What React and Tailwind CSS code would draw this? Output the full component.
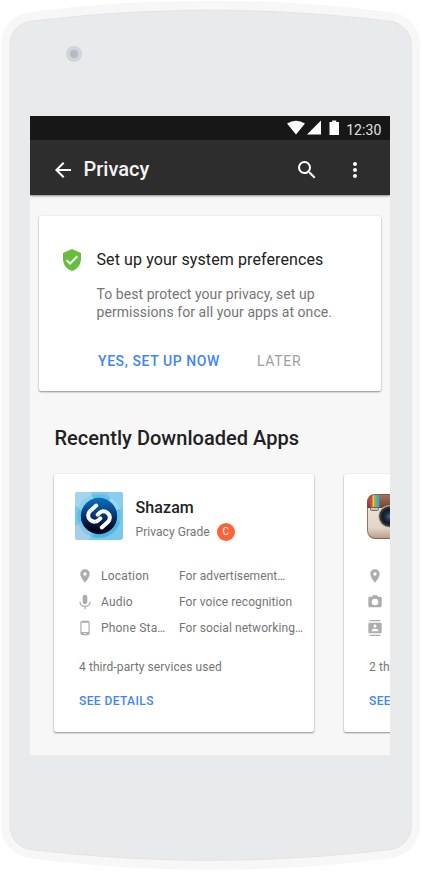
import React from 'react';
import {
  MdArrowBack, MdSearch, MdMoreVert, MdLocationOn, MdPhoneAndroid,
  MdContacts, MdVerifiedUser,
} from 'react-icons/md';

function DeviceShell() {
  return (
    <svg className="absolute inset-0" width="421" height="871" viewBox="0 0 421 871">
      <path d="M1 44C1 27 14 14 30 12.3C90 4 150 .8 210.5 .8S331 4 391 12.3C407 14 420 27 420 44V826C420 843 407 856 391 858.2C331 866 271 869.7 210.5 869.7S90 866 30 858.2C14 856 1 843 1 826Z" fill="#f7f7f7" />
      <path d="M10 44C10 32 20 22.5 31 21.3C90 14 150 10.3 210.5 10.3S331 14 390 21.3C401 22.5 411.3 32 411.3 44V826C411.3 839 401 848.5 390 849.5C331 856.5 271 860.3 210.5 860.3S90 856.5 31 849.5C20 848.5 10 839 10 826Z" fill="#e9eaec" stroke="#e3e4e8" />
      <circle cx="74" cy="54" r="8" fill="#d0d6d8" />
      <circle cx="74" cy="54" r="4" fill="#b4bac7" />
    </svg>
  );
}

function ShazamIcon() {
  return (
    <svg width="48" height="48" viewBox="0 0 48 48" className="block rounded-[3px]">
      <defs>
        <linearGradient id="sz" x1="0" y1="0" x2="0" y2="1">
          <stop offset="0" stopColor="#0c6fbd" />
          <stop offset=".45" stopColor="#083a7c" />
          <stop offset=".85" stopColor="#04061f" />
        </linearGradient>
      </defs>
      <rect width="48" height="48" fill="#7cc8ea" />
      <path d="M0 0H16L24 24L0 14Z" fill="#a3d5ee" />
      <path d="M0 48V34L24 24L14 48Z" fill="#a9cfe8" />
      <path d="M34 0L24 24L48 14V0Z" fill="#8acdf0" />
      <circle cx="24" cy="24" r="22" fill="#63bfe6" />
      <path d="M24 24L3 17A22 22 0 0 1 17 3Z" fill="#8ed0ec" />
      <path d="M24 24L36 5.500A22 22 0 0 1 45 17Z" fill="#9ad7f1" />
      <path d="M24 24L3 31A22 22 0 0 0 15 44Z" fill="#82c9e9" />
      <path d="M24 24L45 30A22 22 0 0 1 18 45Z" fill="#49b5e2" />
      <circle cx="24" cy="24" r="18.200" fill="url(#sz)" />
      <g fill="none" stroke="#fff" strokeWidth="4" strokeLinecap="round" strokeLinejoin="round">
        <path d="M21.200 13.600L15.200 18.900C12.300 21.600 12.600 26 15.500 28.200C18.200 30.200 21.300 30 23.700 27.900L25.300 26.400" />
        <path d="M26.800 35.400L32.800 30.100C35.700 27.400 35.400 23 32.500 20.800C29.800 18.800 26.700 19 24.300 21.100L22.700 22.600" />
      </g>
    </svg>
  );
}

function InstagramIcon() {
  return (
    <svg width="45" height="45" viewBox="0 0 45 45" className="block">
      <defs>
        <clipPath id="igc"><rect width="45" height="45" rx="8" /></clipPath>
        <linearGradient id="igb" x1="0" y1="0" x2="0" y2="1">
          <stop offset="0" stopColor="#eee7dc" /><stop offset=".75" stopColor="#e2d6c8" /><stop offset="1" stopColor="#b89c86" />
        </linearGradient>
        <linearGradient id="igt" x1="0" y1="0" x2="0" y2="1">
          <stop offset="0" stopColor="#a57761" /><stop offset="1" stopColor="#71432f" />
        </linearGradient>
        <radialGradient id="igl" cx=".5" cy=".5" r=".5">
          <stop offset="0" stopColor="#357080" /><stop offset=".45" stopColor="#27304e" /><stop offset="1" stopColor="#10151d" />
        </radialGradient>
      </defs>
      <g clipPath="url(#igc)">
        <rect width="45" height="45" fill="url(#igb)" />
        <rect width="45" height="14" fill="url(#igt)" />
        <rect x="3" width="2.400" height="13" fill="#e83c45" />
        <rect x="5.400" width="2.300" height="13" fill="#f2c536" />
        <rect x="7.700" width="2.200" height="13" fill="#6cc163" />
        <rect x="9.900" width="2.400" height="13" fill="#37a5e8" />
        <rect x="3.500" y="13.500" width="8" height="3" rx="1" fill="#c9c3b9" stroke="#665f57" strokeWidth=".9" />
        <rect x=".5" y=".5" width="44" height="44" rx="8" fill="none" stroke="#745140" strokeOpacity=".75" />
      </g>
      <circle cx="22.500" cy="22.500" r="11.200" fill="#bcb3a8" />
      <circle cx="22.500" cy="22.500" r="10.300" fill="#343437" />
      <circle cx="22.500" cy="22.500" r="8" fill="url(#igl)" />
    </svg>
  );
}

function CameraIcon({ className }) {
  return (
    <svg className={className} viewBox="0 0 24 24" fill="currentColor">
      <path fillRule="evenodd" d="M9 2L7.170 4H4C2.900 4 2 4.900 2 6V18C2 19.100 2.900 20 4 20H20C21.100 20 22 19.100 22 18V6C22 4.900 21.100 4 20 4H16.830L15 2ZM12 7A5 5 0 1 1 12 17A5 5 0 1 1 12 7Z" />
    </svg>
  );
}

function MicIcon({ className }) {
  return (
    <svg className={className} viewBox="0 0 24 24" fill="none" stroke="currentColor">
      <rect x="8.500" y="1" width="7" height="14.500" rx="3.500" fill="currentColor" stroke="none" />
      <path d="M4.500 11.500C4.500 16 8 18.500 12 18.500S19.500 16 19.500 11.500M12 18.500V23" strokeWidth="2" />
    </svg>
  );
}

const shadow = 'shadow-[0_1px_2px_rgba(0,0,0,0.42),0_0_1px_rgba(0,0,0,0.12)]';

function Permission({ icon: Icon, label, reason }) {
  return (
    <li className="flex h-[26px] items-center text-[12px] text-[#757575]">
      <Icon className="size-[16px] shrink-0 text-[#adadad]" />
      <span className="ml-[8px] w-[78px] shrink-0 tracking-[0.2px]">{label}</span>
      <span className="tracking-[0.08px]">{reason}</span>
    </li>
  );
}

function AppCard({ picture, name, permissions, services }) {
  return (
    <article className={`h-[258px] w-[260px] shrink-0 rounded-[2px] bg-white ${shadow}`}>
      <div className="flex h-[88px] pt-[18px] pl-[21px]">
        <div className="w-[48px] shrink-0">{picture}</div>
        {name && (
          <div className="ml-[12.5px] pt-[4.5px]">
            <h3 className="text-[16px] leading-[22px] font-medium tracking-[0.1px] text-[#212121]">{name}</h3>
            <div className="mt-[3px] flex h-[20px] items-center text-[12px] text-[#757575]">
              <span className="tracking-[0.06px]">Privacy Grade</span>
              <span className="ml-[7px] flex size-[18px] items-center justify-center rounded-full bg-[#ff6138] text-[10px] text-white">C</span>
            </div>
          </div>
        )}
      </div>
      <ul className="pt-px pl-[23px]">
        {permissions.map((p) => <Permission key={p.label} {...p} />)}
      </ul>
      <p className="mt-[17.5px] ml-[25px] text-[12px] leading-[16px] tracking-[0.08px] text-[#757575]">{services} third-party services used</p>
      <div className="mt-[18px] ml-[25px] text-[12px] leading-[16px] font-medium tracking-[0.4px] text-[#4285f4]">SEE DETAILS</div>
    </article>
  );
}

export default function App() {
  return (
    <div className="relative h-[871px] w-[421px] overflow-hidden bg-white font-['Roboto',sans-serif] whitespace-nowrap">
      <DeviceShell />
      <main className="relative mt-[116px] ml-[30px] h-[639px] w-[360px] overflow-hidden bg-[#f7f7f7]">
        <div className="flex h-[24px] items-center justify-end bg-[#171717] pr-[8.5px] text-white">
          <svg width="54" height="16" viewBox="0 0 54 16" fill="currentColor">
            <path d="M0 3.500Q9 -2.200 18 3.500L9 14.500Z" />
            <path d="M34 .5V14.500H20Z" />
            <path d="M42.500 2h2.700V.5h4v1.500h2.800V15h-9.500Z" />
          </svg>
          <span className="ml-[5px] pt-[3px] text-[14px] leading-[20px] tracking-[0.1px] text-[#e0e0e0]">12:30</span>
        </div>
        <header className="relative flex h-[55px] items-center bg-[#2d2d2d] pt-[5px] text-white shadow-[0_1px_2px_rgba(0,0,0,0.45)]">
          <MdArrowBack className="ml-[21px] size-[24px]" />
          <h1 className="mb-[2px] ml-[8.5px] text-[20px] leading-[24px] font-medium tracking-[0px] text-[#f5f5f5]">Privacy</h1>
          <MdSearch className="ml-auto size-[24px]" />
          <MdMoreVert className="mr-[23px] ml-[24px] size-[24px]" />
        </header>
        <section className={`mx-[9px] mt-[21px] h-[175px] rounded-[2px] bg-white pt-[32px] pl-[21px] ${shadow}`}>
          <div className="flex h-[24px] items-center">
            <MdVerifiedUser className="size-[24px] text-[#67bd3c]" />
            <h2 className="ml-[12.5px] text-[16px] leading-[24px] tracking-[0.1px] text-[#212121]">Set up your system preferences</h2>
          </div>
          <p className="mt-[13px] ml-[36.5px] text-[14px] leading-[18px] tracking-[0.06px] text-[#757575]">
            To best protect your privacy, set up<br />permissions for all your apps at once.
          </p>
          <div className="mt-[30px] ml-[38px] flex text-[14px] leading-[20px] font-medium">
            <span className="w-[159px] tracking-[0.58px] text-[#4285f4]">YES, SET UP NOW</span>
            <span className="font-normal tracking-[0.7px] text-[#9e9e9e]">LATER</span>
          </div>
        </section>
        <h2 className="mt-[33px] ml-[24.5px] text-[20px] leading-[28px] font-medium tracking-[0.03px] text-[#212121]">Recently Downloaded Apps</h2>
        <div className="mt-[22px] ml-[24px] flex gap-[30px]">
          <AppCard
            picture={<ShazamIcon />}
            name="Shazam"
            services={4}
            permissions={[
              { icon: MdLocationOn, label: 'Location', reason: 'For advertisement…' },
              { icon: MicIcon, label: 'Audio', reason: 'For voice recognition' },
              { icon: MdPhoneAndroid, label: 'Phone Sta…', reason: 'For social networking…' },
            ]}
          />
          <AppCard
            picture={<div className="pt-[2px] pl-[2px]"><InstagramIcon /></div>}
            services={2}
            permissions={[
              { icon: MdLocationOn, label: '' },
              { icon: CameraIcon, label: ' ' },
              { icon: MdContacts, label: '  ' },
            ]}
          />
        </div>
      </main>
    </div>
  );
}
